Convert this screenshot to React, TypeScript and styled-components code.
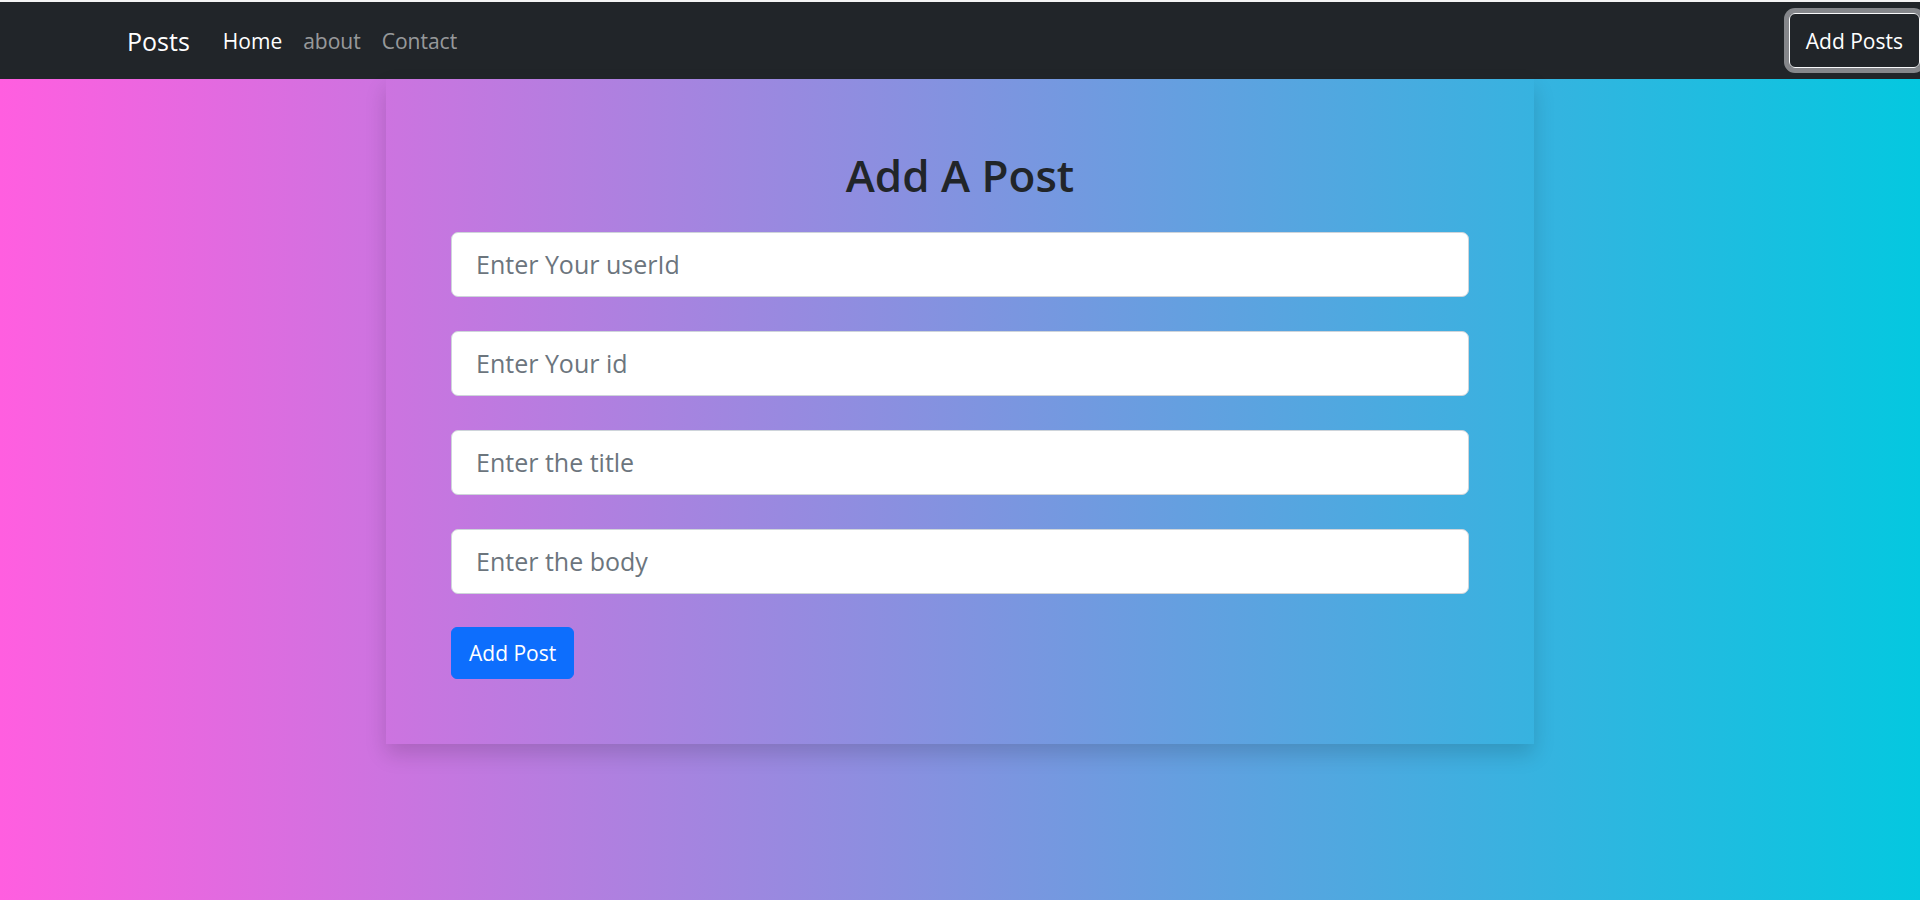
import React from 'react';
import styled, { createGlobalStyle } from 'styled-components';

const GlobalStyle = createGlobalStyle`
  * {
    box-sizing: border-box;
  }
  body {
    margin: 0;
    font-family: 'Open Sans', 'Noto Sans', sans-serif;
    overflow-x: hidden;
  }
`;

const Page = styled.div`
  min-height: 100vh;
  background: linear-gradient(to right, #ff5ee0, #04c8e0);
  border-top: 2px solid #f4f4f4;
`;

const Navbar = styled.nav`
  height: 77px;
  background-color: #212529;
  display: flex;
  align-items: center;
  justify-content: space-between;
  padding-left: 127px;
`;

const NavLeft = styled.div`
  display: flex;
  align-items: center;
  gap: 21px;
`;

const Brand = styled.a`
  font-size: 25px;
  color: #fff;
  margin-right: 12px;
  text-decoration: none;
`;

const NavLink = styled.a<{ $active?: boolean }>`
  font-size: 21px;
  color: ${({ $active }) => ($active ? '#fff' : 'rgba(255, 255, 255, 0.55)')};
  text-decoration: none;
`;

const OutlineButton = styled.button`
  font-family: inherit;
  font-size: 21px;
  color: #fff;
  background: transparent;
  border: 1px solid #f8f9fa;
  border-radius: 6px;
  height: 55px;
  padding: 0 16px;
  margin-right: 0;
  box-shadow: 0 0 0 5px rgba(200, 202, 205, 0.6);
`;

const Card = styled.div`
  width: 1148px;
  margin: 0 auto;
  padding: 70px 65px 65px;
  box-shadow: 0 10px 20px rgba(0, 0, 0, 0.15);
  display: flex;
  flex-direction: column;
`;

const Title = styled.h1`
  margin: 0 0 30px;
  text-align: center;
  font-size: 44px;
  font-weight: 600;
  line-height: 1.2;
  color: #212529;
`;

const Input = styled.input`
  height: 65px;
  width: 100%;
  padding: 0 24px;
  font-family: inherit;
  font-size: 25px;
  color: #212529;
  background: #fff;
  border: 1px solid #ced4da;
  border-radius: 7px;
  margin-bottom: 34px;
  outline: none;

  &::placeholder {
    color: #6c757d;
  }
`;

const SubmitButton = styled.button`
  align-self: flex-start;
  margin-top: -1px;
  height: 52px;
  padding: 0 17px;
  font-family: inherit;
  font-size: 21px;
  color: #fff;
  background-color: #0d6efd;
  border: 1px solid #0d6efd;
  border-radius: 6px;
`;

const fields = ['Enter Your userId', 'Enter Your id', 'Enter the title', 'Enter the body'];

const App: React.FC = () => {
  return (
    <>
      <GlobalStyle />
      <Page>
        <Navbar>
          <NavLeft>
            <Brand href="#">Posts</Brand>
            <NavLink href="#" $active>
              Home
            </NavLink>
            <NavLink href="#">about</NavLink>
            <NavLink href="#">Contact</NavLink>
          </NavLeft>
          <OutlineButton>Add Posts</OutlineButton>
        </Navbar>
        <Card>
          <Title>Add A Post</Title>
          {fields.map((f) => (
            <Input key={f} type="text" placeholder={f} />
          ))}
          <SubmitButton>Add Post</SubmitButton>
        </Card>
      </Page>
    </>
  );
};

export default App;
